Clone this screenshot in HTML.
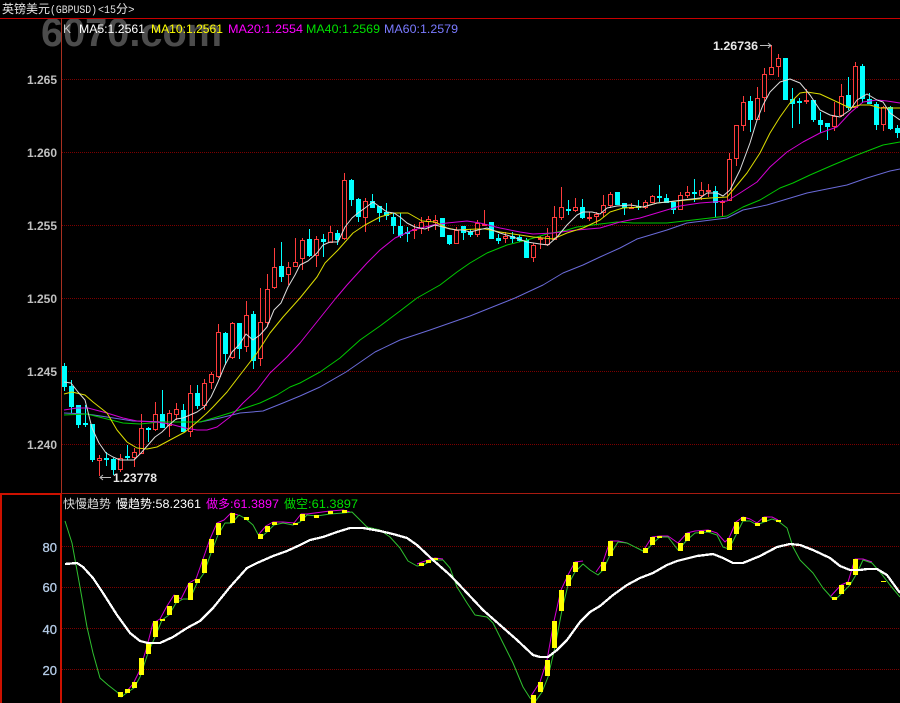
<!DOCTYPE html>
<html><head><meta charset="utf-8"><style>
html,body{margin:0;padding:0;background:#000;width:900px;height:703px;overflow:hidden}
svg{display:block}
text{font-family:"Liberation Sans","WenQuanYi Zen Hei",sans-serif;font-size:12px}
.c{font-family:"WenQuanYi Zen Hei","Noto Sans CJK SC",sans-serif;font-size:12px}
.m{font-family:"Liberation Mono",monospace;font-size:11px}
.a{font-weight:bold;fill:#c0c0c0;text-anchor:end}
.b{fill:#b4cbe6;stroke:#b4cbe6;stroke-width:.3px;text-anchor:end;font-size:13px}
.l{fill:none;stroke-width:1;stroke-linejoin:round}
</style></head><body>
<svg width="900" height="703" viewBox="0 0 900 703" xmlns="http://www.w3.org/2000/svg">
<defs><clipPath id="cw"><rect x="0" y="19" width="900" height="60"/></clipPath><clipPath id="cl"><rect x="62" y="495" width="838" height="208"/></clipPath></defs>
<rect width="900" height="703" fill="#000"/>
<text x="41" y="46" clip-path="url(#cw)" style="font-size:40px;font-weight:bold" fill="#4c4c4c" textLength="181" lengthAdjust="spacingAndGlyphs">6070.com</text>

<g fill="none" stroke="#7c0000" stroke-width="1" stroke-dasharray="1 1">
<path d="M62 79.5H900"/>
<path d="M62 152.5H900"/>
<path d="M62 225.5H900"/>
<path d="M62 298.5H900"/>
<path d="M62 371.5H900"/>
<path d="M62 444.5H900"/>
<path d="M62 546.5H900"/>
<path d="M62 587.5H900"/>
<path d="M62 628.5H900"/>
<path d="M62 669.5H900"/>
</g>

<g shape-rendering="crispEdges">
<path d="M0 18.5H900" stroke="#c80000" fill="none"/>
<path d="M61.5 18V493" stroke="#a83020" fill="none"/>
<path d="M62 493.5H900" stroke="#a81a10" fill="none"/>
<rect x="0" y="493" width="62" height="2" fill="#cc1100"/>
<rect x="0" y="493" width="2" height="210" fill="#cc1100"/>
<rect x="60" y="493" width="2" height="210" fill="#cc1100"/>
</g>

<text x="2" y="13" class="c" fill="#e4e4e4">英镑美元</text>
<text x="50" y="13" class="m" fill="#e4e4e4" textLength="47" lengthAdjust="spacingAndGlyphs">(GBPUSD)</text>
<text x="98" y="13" class="m" fill="#e4e4e4" textLength="18" lengthAdjust="spacingAndGlyphs">&lt;15</text>
<text x="116" y="13" class="c" fill="#e4e4e4">分</text>
<text x="128" y="13" class="m" fill="#e4e4e4">&gt;</text>

<text x="63" y="33" fill="#c8c8c8">K</text>
<text x="79" y="33" fill="#fff" textLength="66" lengthAdjust="spacingAndGlyphs">MA5:1.2561</text>
<text x="151" y="33" fill="#ff0" textLength="72" lengthAdjust="spacingAndGlyphs">MA10:1.2561</text>
<text x="228" y="33" fill="#f0f" textLength="75" lengthAdjust="spacingAndGlyphs">MA20:1.2554</text>
<text x="306" y="33" fill="#00e000" textLength="74" lengthAdjust="spacingAndGlyphs">MA40:1.2569</text>
<text x="384" y="33" fill="#7a7aff" textLength="74" lengthAdjust="spacingAndGlyphs">MA60:1.2579</text>

<text x="57" y="84" class="a">1.265</text>
<text x="57" y="157" class="a">1.260</text>
<text x="57" y="230" class="a">1.255</text>
<text x="57" y="303" class="a">1.250</text>
<text x="57" y="376" class="a">1.245</text>
<text x="57" y="449" class="a">1.240</text>
<text x="57" y="552" class="b">80</text>
<text x="57" y="592" class="b">60</text>
<text x="57" y="634" class="b">40</text>
<text x="57" y="675" class="b">20</text>

<g shape-rendering="crispEdges" fill="none">
<path stroke="#00ffff" d="M64.5 363V391M71.5 380V413M78.5 405V428M85.5 405V427M92.5 424V462M106.5 452V466M113.5 458V475M127.5 445V460M148.5 427V442M162.5 390V428M183.5 404V432M197.5 385V409M225.5 332V365M239.5 323V359M253.5 311V369M281.5 242V282M309.5 229V257M323.5 234V257M337.5 230V245M351.5 179V206M358.5 198V222M372.5 194V208M379.5 206V222M386.5 203V220M393.5 213V234M400.5 213V238M407.5 227V242M449.5 235V245M463.5 226V240M470.5 229V237M498.5 234V244M512.5 232V243M519.5 235V242M526.5 238V258M568.5 200V215M582.5 199V219M617.5 192V205M624.5 203V215M638.5 200V210M659.5 185V202M666.5 194V203M673.5 202V214M694.5 179V202M715.5 186V217M750.5 96V132M792.5 88V128M799.5 98V124M813.5 100V122M820.5 112V133M827.5 123V140M848.5 77V110M862.5 64V103M869.5 93V104M876.5 102V130M890.5 106V130M897.5 125V138"/>
<path stroke="#ff3c3c" d="M99.5 455V476M120.5 454V472M134.5 448V467M141.5 414V454M155.5 402V431M169.5 410V437M176.5 403V420M190.5 385V437M204.5 379V410M211.5 372V389M218.5 324V378M232.5 322V359M246.5 301V352M260.5 288V366M267.5 274V327M274.5 248V289M288.5 262V285M295.5 238V267M302.5 238V270M316.5 236V267M330.5 226V243M344.5 173V240M365.5 198V232M414.5 224V239M421.5 217V234M428.5 216V231M435.5 215V230M456.5 227V244M477.5 220V237M484.5 210V226M505.5 232V243M533.5 243V262M540.5 236V249M547.5 228V246M554.5 206V240M561.5 187V220M575.5 198V212M589.5 212V221M596.5 212V225M603.5 195V217M610.5 192V208M631.5 203V209M645.5 200V209M652.5 195V203M680.5 192V210M687.5 186V198M701.5 182V200M708.5 184V197M722.5 200V217M729.5 153V201M736.5 125V166M743.5 96V131M757.5 87V120M764.5 68V112M771.5 45V75M778.5 54V77M806.5 89V104M834.5 102V131M841.5 84V117M855.5 62V108M883.5 106V131"/>
<path fill="#00ffff" d="M62 366h5v21h-5zM69 386h5v21h-5zM76 405h5v20h-5zM83 423h5v2h-5zM90 424h5v36h-5zM104 458h5v2h-5zM111 459h5v11h-5zM125 456h5v2h-5zM146 428h5v2h-5zM160 414h5v14h-5zM181 410h5v22h-5zM195 393h5v13h-5zM223 333h5v21h-5zM237 323h5v26h-5zM251 314h5v47h-5zM279 266h5v11h-5zM307 239h5v17h-5zM321 239h5v3h-5zM335 233h5v7h-5zM349 180h5v20h-5zM356 199h5v18h-5zM370 201h5v7h-5zM377 206h5v7h-5zM384 212h5v4h-5zM391 217h5v9h-5zM398 226h5v10h-5zM405 232h5v2h-5zM440 218h5v19h-5zM447 235h5v9h-5zM461 226h5v7h-5zM468 232h5v3h-5zM489 222h5v17h-5zM496 238h5v3h-5zM510 236h5v3h-5zM517 237h5v4h-5zM524 240h5v18h-5zM566 209h5v2h-5zM580 207h5v11h-5zM615 192h5v13h-5zM622 203h5v5h-5zM636 206h5v2h-5zM657 196h5v2h-5zM664 198h5v5h-5zM671 202h5v8h-5zM692 192h5v2h-5zM713 191h5v12h-5zM748 101h5v19h-5zM783 58h5v42h-5zM790 99h5v5h-5zM797 101h5v2h-5zM811 100h5v20h-5zM818 120h5v5h-5zM825 123h5v4h-5zM846 95h5v13h-5zM860 66h5v33h-5zM867 99h5v5h-5zM874 104h5v21h-5zM888 107h5v22h-5zM895 128h5v5h-5z"/>
<path fill="#000" stroke="#ff3c3c" d="M97.5 458.5h4v2h-4zM118.5 458.5h4v11h-4zM132.5 452.5h4v5h-4zM139.5 428.5h4v25h-4zM153.5 414.5h4v15h-4zM167.5 413.5h4v12h-4zM174.5 409.5h4v5h-4zM188.5 393.5h4v38h-4zM202.5 383.5h4v22h-4zM209.5 374.5h4v8h-4zM216.5 332.5h4v44h-4zM230.5 323.5h4v34h-4zM244.5 315.5h4v31h-4zM258.5 322.5h4v36h-4zM265.5 289.5h4v33h-4zM272.5 267.5h4v20h-4zM286.5 267.5h4v7h-4zM293.5 262.5h4v4h-4zM300.5 240.5h4v18h-4zM314.5 239.5h4v16h-4zM328.5 232.5h4v10h-4zM342.5 180.5h4v58h-4zM363.5 201.5h4v16h-4zM412.5 229.5h4v1h-4zM419.5 222.5h4v6h-4zM426.5 219.5h4v2h-4zM433.5 220.5h4v2h-4zM454.5 230.5h4v13h-4zM475.5 223.5h4v11h-4zM482.5 224.5h4v1h-4zM503.5 236.5h4v2h-4zM531.5 245.5h4v12h-4zM538.5 238.5h4v1h-4zM545.5 236.5h4v8h-4zM552.5 217.5h4v22h-4zM559.5 207.5h4v10h-4zM573.5 207.5h4v3h-4zM587.5 217.5h4v1h-4zM594.5 214.5h4v2h-4zM601.5 205.5h4v7h-4zM608.5 194.5h4v11h-4zM629.5 207.5h4v1h-4zM643.5 202.5h4v5h-4zM650.5 196.5h4v6h-4zM678.5 195.5h4v14h-4zM685.5 192.5h4v3h-4zM699.5 190.5h4v5h-4zM706.5 190.5h4v1h-4zM720.5 201.5h4v1h-4zM727.5 159.5h4v41h-4zM734.5 125.5h4v33h-4zM741.5 102.5h4v23h-4zM755.5 98.5h4v21h-4zM762.5 74.5h4v23h-4zM769.5 67.5h4v7h-4zM776.5 58.5h4v8h-4zM804.5 100.5h4v1h-4zM832.5 116.5h4v10h-4zM839.5 96.5h4v19h-4zM853.5 66.5h4v41h-4zM881.5 107.5h4v17h-4z"/>
</g>

<polyline class="l" stroke="#6a6ad8" points="64,413 87,414 107,417 133,421 167,422 200,422 220,418 240,413 263,411 283,403 300,396 320,387 346,372 375,352 400,340 430,330 470,316 500,304 515,298 543,285 563,273 583,265 600,257 620,248 637,239 667,230 687,223 727,218 743,210 767,205 807,193 847,185 867,178 890,171 900,169"/>
<polyline class="l" stroke="#00c800" points="64,415 87,414 107,419 123,423 140,424 160,422 183,422 200,422 217,417 233,412 260,403 277,395 290,387 300,383 320,372 340,358 360,340 380,326 400,311 417,298 440,285 457,272 470,263 487,253 507,245 527,240 547,234 567,230 577,227 600,224 617,222 633,223 667,223 693,220 727,216 743,207 760,200 780,188 793,183 810,175 833,165 857,155 883,145 900,142"/>
<polyline class="l" stroke="#d400d4" points="64,410 77,408 88,408 107,413 123,418 137,421 157,422 170,424 185,428 197,430 207,430 217,427 230,417 243,403 257,390 270,373 287,357 300,343 336,298 347,285 367,263 380,250 395,238 413,230 433,225 447,223 467,221 480,223 500,228 520,232 533,234 553,233 577,230 600,228 620,222 640,218 660,212 680,206 700,203 727,201 740,193 757,182 770,167 787,152 803,142 820,133 837,127 850,113 863,102 877,100 887,101 900,103"/>
<polyline class="l" stroke="#dcdc00" points="64,394 72,392 85,395 93,402 107,413 117,430 127,442 137,448 147,449 157,447 170,440 185,432 197,422 207,413 213,407 227,392 240,375 257,353 270,333 283,317 300,298 317,277 325,263 338,250 353,233 365,225 380,217 393,213 408,213 422,221 435,222 447,228 457,230 477,229 485,229 500,232 520,235 533,237 553,239 567,233 583,228 600,220 610,212 623,208 643,207 657,203 667,202 687,200 710,198 727,197 733,190 747,173 760,153 770,133 780,117 790,103 800,93 807,92 820,94 833,100 850,108 860,105 870,105 880,108 900,108"/>
<polyline class="l" stroke="#dcdcdc" points="64,382 71,383 78,392 85,400 92,428 99,443 106,453 113,457 120,460 134,460 141,453 148,445 155,437 162,432 169,425 176,419 183,418 190,415 197,412 204,407 211,397 218,382 225,365 232,352 239,345 246,334 253,340 260,335 267,327 274,310 281,303 288,287 295,275 300,265 308,261 317,253 323,245 330,242 338,242 345,227 352,218 358,213 365,208 373,202 380,207 387,212 394,213 400,217 407,223 415,227 425,229 435,225 443,227 450,229 457,230 463,230 470,232 478,230 487,228 500,233 513,237 527,242 540,244 548,245 557,237 567,225 577,215 583,212 592,212 600,214 607,208 617,206 630,205 643,207 657,203 667,202 683,200 700,198 707,193 717,193 723,196 730,190 740,170 750,143 757,120 763,105 770,92 780,82 790,79 800,83 810,95 820,110 830,115 840,117 850,110 857,100 867,94 877,100 883,102 890,113 900,120"/>

<text x="713" y="50" style="font-weight:bold" fill="#e8e8e8" textLength="45" lengthAdjust="spacingAndGlyphs">1.26736</text>
<path d="M760 45.5H771M768 43L771 45.5L768 48" fill="none" stroke="#bbb"/>
<text x="113" y="482" style="font-weight:bold" fill="#e8e8e8" textLength="44" lengthAdjust="spacingAndGlyphs">1.23778</text>
<path d="M111 477.5H100M103 475L100 477.5L103 480" fill="none" stroke="#bbb"/>

<text x="63" y="508" class="c" fill="#d8d8d8">快慢趋势</text>
<text x="116" y="508" class="c" fill="#fff">慢趋势</text>
<text x="152" y="508" fill="#fff" textLength="49" lengthAdjust="spacingAndGlyphs">:58.2361</text>
<text x="206" y="508" class="c" fill="#f0f">做多</text>
<text x="230" y="508" fill="#f0f" textLength="49" lengthAdjust="spacingAndGlyphs">:61.3897</text>
<text x="284" y="508" class="c" fill="#00e000">做空</text>
<text x="308" y="508" fill="#00e000" textLength="50" lengthAdjust="spacingAndGlyphs">:61.3897</text>

<g clip-path="url(#cl)">
<polyline class="l" stroke="#d400d4" points="126,692 133,684 139,672 146,650 153,623 160,619 167,606 174,595 181,599 189,583 196,579 203,559 210,539 217,523 224,520 231,513 238,515"/>
<polyline class="l" stroke="#d400d4" points="259,534 266,526 273,522 283,522 294,523 301,514 307,514 330,511 343,510 350,512"/>
<polyline class="l" stroke="#d400d4" points="417,564 428,560 435,558 443,559"/>
<polyline class="l" stroke="#d400d4" points="531,696 540,682 547,660 554,621 561,590 568,575 575,562 583,561"/>
<polyline class="l" stroke="#d400d4" points="596,572 603,562 610,541 618,541 627,543"/>
<polyline class="l" stroke="#d400d4" points="645,548 652,537 660,536 668,536 678,543 687,533 695,531 708,530 717,533 725,542 729,538 736,522 743,517 750,519 757,523 764,517 772,517 778,520"/>
<polyline class="l" stroke="#d400d4" points="830,597 841,585 848,582 855,559 863,559 872,562"/>
<polyline class="l" stroke="#2fc02f" points="65,521 72,543 80,587 87,627 93,653 100,678 108,685 117,692 121,697 128,692 134,688 140,677 148,653 155,637 162,620 169,615 176,603 183,599 190,599 197,583 204,573 211,553 218,535 225,523 232,523 239,515 246,519 253,525 260,538 267,532 274,525 283,523 293,525 300,522 307,515 317,516 330,514 343,513 352,512 358,518 367,527 380,530 390,537 400,548 408,561 417,566 423,565 433,560 443,560 450,568 457,587 467,603 475,615 487,617 493,623 503,643 513,663 523,687 530,698 535,702 542,692 548,677 555,647 562,610 568,585 575,572 583,564 590,570 598,575 603,570 610,555 618,542 627,543 637,548 645,552 653,543 660,537 668,537 678,550 687,540 695,533 708,532 717,535 723,547 729,549 737,533 743,521 750,521 757,525 764,522 772,519 778,521 787,528 793,547 800,560 813,573 823,588 832,598 837,598 843,592 850,585 857,573 863,560 872,563 880,572 890,585 900,597"/>
<g fill="#ffff00" shape-rendering="crispEdges">
<path d="M118 692h5v5h-5zM125 689h5v4h-5zM132 682h5v6h-5zM139 658h5v17h-5zM146 643h5v11h-5zM153 621h5v16h-5zM160 619h5v2h-5zM167 606h5v9h-5zM174 595h5v8h-5zM188 583h5v17h-5zM195 579h5v4h-5zM202 559h5v14h-5zM209 539h5v14h-5zM216 523h5v12h-5zM230 513h5v10h-5zM244 517h5v3h-5zM258 534h5v5h-5zM265 526h5v6h-5zM272 522h5v3h-5zM293 523h5v2h-5zM300 514h5v7h-5zM314 515h5v3h-5zM328 511h5v3h-5zM342 510h5v3h-5zM419 563h5v3h-5zM426 560h5v3h-5zM433 558h5v2h-5zM531 695h5v8h-5zM538 682h5v10h-5zM545 660h5v16h-5zM552 621h5v27h-5zM559 590h5v21h-5zM566 575h5v11h-5zM573 562h5v10h-5zM601 562h5v9h-5zM608 541h5v15h-5zM643 548h5v5h-5zM650 537h5v8h-5zM657 536h5v2h-5zM678 543h5v8h-5zM685 533h5v8h-5zM699 531h5v3h-5zM706 530h5v2h-5zM727 538h5v12h-5zM734 522h5v12h-5zM741 517h5v4h-5zM755 523h5v3h-5zM762 517h5v5h-5zM776 520h5v2h-5zM832 597h5v3h-5zM839 585h5v9h-5zM846 582h5v3h-5zM853 559h5v16h-5zM881 581h5v1h-5z"/>
</g>
<polyline fill="none" stroke="#fff" stroke-width="2.3" stroke-linejoin="round" shape-rendering="crispEdges" points="65,564 77,563 83,567 93,578 103,593 117,615 130,633 140,641 148,643 160,643 173,637 187,628 200,621 213,608 230,587 247,568 257,563 273,556 287,551 300,545 310,540 323,537 337,532 350,528 363,528 380,531 393,534 407,538 417,545 433,560 450,575 467,593 483,610 500,625 517,640 533,655 540,657 548,657 557,650 567,640 580,622 590,612 600,606 613,595 627,585 640,578 653,573 667,565 677,561 697,556 713,554 723,558 733,563 743,563 760,556 777,547 790,544 800,545 813,550 830,558 840,566 850,570 860,570 867,569 877,569 887,575 900,593"/>
</g>
</svg>
</body></html>
